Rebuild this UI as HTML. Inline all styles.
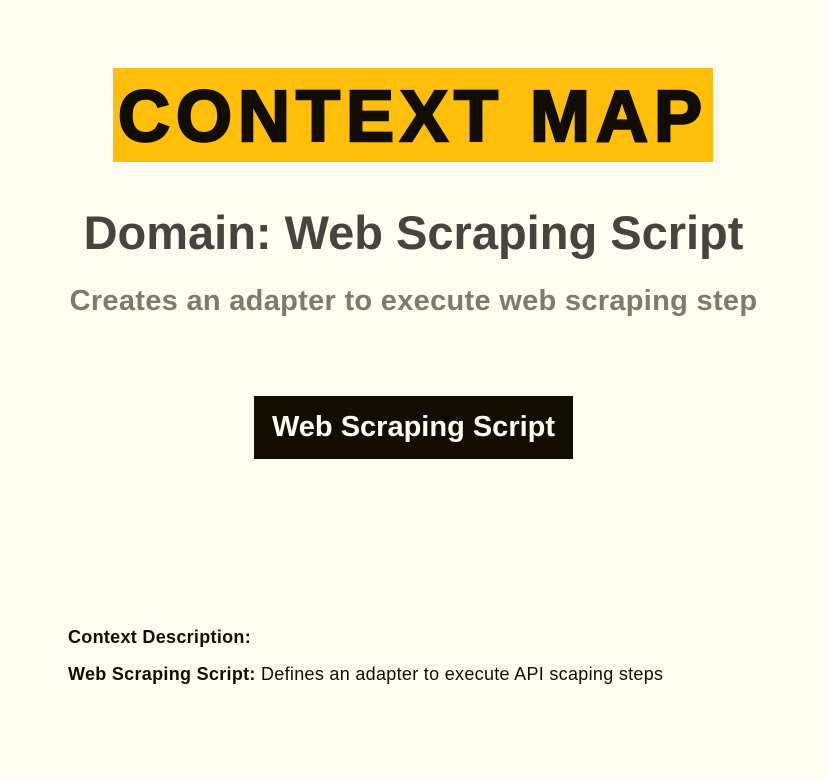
<!DOCTYPE html>
<html><head><meta charset="utf-8"><style>
html,body{margin:0;padding:0;background:#fffcf0;width:827px;height:779px;overflow:hidden;font-family:"Liberation Sans",Arial,sans-serif;}
.t{position:absolute;left:113px;top:68px;width:600px;height:94px;background:#ffbe0a;}
.t span{position:absolute;left:0;right:0;top:2px;line-height:94px;text-align:center;font-weight:900;font-size:72px;color:#110d00;letter-spacing:6px;-webkit-text-stroke:2.5px #110d00;white-space:nowrap;}
.h{position:absolute;left:0;width:827px;text-align:center;font-weight:bold;white-space:nowrap;}
.b{position:absolute;left:254px;top:396px;width:319px;height:63px;background:#110d00;color:#fffcf0;font-weight:bold;font-size:29px;line-height:63px;text-align:center;white-space:nowrap;}
.p{position:absolute;left:68px;font-size:18px;color:#110d00;white-space:nowrap;letter-spacing:0.3px;}
</style></head><body>
<div class="t"><span>CONTEXT MAP</span></div>
<div class="h" style="top:205px;font-size:47px;color:#45443e;">Domain: Web Scraping Script</div>
<div class="h" style="top:285px;font-size:29px;color:#7c7b70;letter-spacing:0.3px;">Creates an adapter to execute web scraping step</div>
<div class="b">Web Scraping Script</div>
<div class="p" style="top:627px;font-weight:bold;">Context Description:</div>
<div class="p" style="top:664px;"><b>Web Scraping Script:</b> Defines an adapter to execute API scaping steps</div>
</body></html>
